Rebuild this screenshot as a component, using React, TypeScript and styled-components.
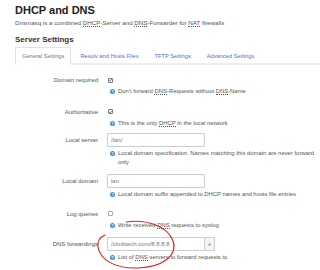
import React from 'react'
import styled, { createGlobalStyle } from 'styled-components'

const GlobalStyle = createGlobalStyle`
  html, body {
    margin: 0;
    padding: 0;
    background: #fff;
  }
  body {
    font-family: "Liberation Sans", Arial, sans-serif;
    color: #404040;
  }
`

const Page = styled.div`
  position: relative;
  width: 320px;
  height: 270px;
  overflow: hidden;
  padding: 4px 0 0 15px;
  box-sizing: border-box;
`

const Title = styled.h2`
  margin: 0;
  font-size: 11px;
  line-height: 13px;
  font-weight: bold;
  color: #222;
`

const Subtitle = styled.div`
  margin-top: 2px;
  font-size: 6.2px;
  line-height: 8px;
  color: #555;
  white-space: nowrap;
`

const Abbr = styled.abbr`
  text-decoration: none;
  border-bottom: 0.5px dotted #555;
`

const SectionTitle = styled.h3`
  margin: 8px 0 0;
  font-size: 8px;
  line-height: 10px;
  font-weight: bold;
  color: #333;
`

const TabList = styled.ul`
  display: flex;
  list-style: none;
  margin: 2px 0 0;
  padding: 0;
  border-bottom: 2px solid #eee;
  height: 16px;
`

const Tab = styled.li<{ $active?: boolean }>`
  box-sizing: border-box;
  height: 18px;
  padding: 0 6px;
  margin-right: 2px;
  font-size: 5.7px;
  line-height: 17px;
  white-space: nowrap;
  color: ${p => (p.$active ? '#777' : '#4c6fd4')};
  background: ${p => (p.$active ? '#fff' : 'transparent')};
  border: 1px solid ${p => (p.$active ? '#e2e2e2' : 'transparent')};
  border-bottom-color: ${p => (p.$active ? '#fff' : 'transparent')};
`

const Row = styled.div<{ $space: number }>`
  display: grid;
  grid-template-columns: 83px 1fr;
  column-gap: 9px;
  margin-top: ${p => p.$space}px;
`

const Label = styled.label<{ $h: number }>`
  text-align: right;
  font-size: 6px;
  line-height: ${p => p.$h}px;
  color: #555;
  white-space: nowrap;
`

const Field = styled.div`
  display: flex;
  flex-direction: column;
  min-width: 0;
`

const Control = styled.div<{ $h: number }>`
  display: flex;
  align-items: center;
  height: ${p => p.$h}px;
`

const Check = styled.span<{ $checked?: boolean }>`
  display: inline-flex;
  align-items: center;
  justify-content: center;
  box-sizing: border-box;
  width: 5px;
  height: 5px;
  margin-left: 1px;
  border: 0.7px solid ${p => (p.$checked ? '#777' : '#aaa')};
  border-radius: 1px;
  background: #fff;
`

const Input = styled.div`
  box-sizing: border-box;
  width: 98px;
  height: 14px;
  border: 1px solid #ccc;
  border-radius: 1px;
  padding: 0 3px;
  font-size: 6px;
  line-height: 12px;
  color: #777;
  white-space: nowrap;
`

const AddButton = styled.div`
  box-sizing: border-box;
  width: 10px;
  height: 14px;
  border: 1px solid #ccc;
  border-left: none;
  background: #f5f5f5;
  color: #4a9a4a;
  font-size: 6px;
  font-weight: bold;
  line-height: 12px;
  text-align: center;
`

const Help = styled.div`
  margin-top: 2px;
  padding-left: 11px;
  position: relative;
  font-size: 5.9px;
  line-height: 8.5px;
  color: #555;
  white-space: nowrap;
`

const HelpIcon = styled.span`
  position: absolute;
  left: 3px;
  top: 2px;
  width: 5px;
  height: 5px;
  border-radius: 50%;
  background: #3d8fe0;
  color: #fff;
  font-size: 4px;
  font-weight: bold;
  line-height: 5px;
  text-align: center;
`

const Annotation = styled.svg`
  position: absolute;
  left: 0;
  top: 0;
  pointer-events: none;
`

const Tick = () => (
  <svg width="4" height="4" viewBox="0 0 4 4">
    <path d="M0.6 2 L1.6 3 L3.4 0.8" fill="none" stroke="#222" strokeWidth="0.9" />
  </svg>
)

const HelpText = ({ children }: React.PropsWithChildren<unknown>) => (
  <Help>
    <HelpIcon>?</HelpIcon>
    {children}
  </Help>
)

const App = () => (
  <>
    <GlobalStyle />
    <Page>
      <Title>DHCP and DNS</Title>
      <Subtitle>
        Dnsmasq is a combined <Abbr>DHCP</Abbr>-Server and <Abbr>DNS</Abbr>-Forwarder for <Abbr>NAT</Abbr> firewalls
      </Subtitle>
      <SectionTitle>Server Settings</SectionTitle>
      <TabList>
        <Tab $active>General Settings</Tab>
        <Tab>Resolv and Hosts Files</Tab>
        <Tab>TFTP Settings</Tab>
        <Tab>Advanced Settings</Tab>
      </TabList>

      <Row $space={10}>
        <Label $h={10}>Domain required</Label>
        <Field>
          <Control $h={10}><Check $checked><Tick /></Check></Control>
          <HelpText>Don't forward <Abbr>DNS</Abbr>-Requests without <Abbr>DNS</Abbr>-Name</HelpText>
        </Field>
      </Row>

      <Row $space={11}>
        <Label $h={10}>Authoritative</Label>
        <Field>
          <Control $h={10}><Check $checked><Tick /></Check></Control>
          <HelpText>This is the only <Abbr>DHCP</Abbr> in the local network</HelpText>
        </Field>
      </Row>

      <Row $space={6}>
        <Label $h={14}>Local server</Label>
        <Field>
          <Control $h={14}><Input>/lan/</Input></Control>
          <HelpText>
            Local domain specification. Names matching this domain are never forward
            <br />only
          </HelpText>
        </Field>
      </Row>

      <Row $space={8}>
        <Label $h={14}>Local domain</Label>
        <Field>
          <Control $h={14}><Input>lan</Input></Control>
          <HelpText>Local domain suffix appended to DHCP names and hosts file entries</HelpText>
        </Field>
      </Row>

      <Row $space={10}>
        <Label $h={10}>Log queries</Label>
        <Field>
          <Control $h={10}><Check /></Control>
          <HelpText>Write received <Abbr>DNS</Abbr> requests to syslog</HelpText>
        </Field>
      </Row>

      <Row $space={8}>
        <Label $h={14}>DNS forwardings</Label>
        <Field>
          <Control $h={14}>
            <Input>/clmbtech.com/8.8.8.8</Input>
            <AddButton>+</AddButton>
          </Control>
          <HelpText>List of <Abbr>DNS</Abbr> servers to forward requests to</HelpText>
        </Field>
      </Row>

      <Annotation width="320" height="270" viewBox="0 0 320 270">
        <path
          d="M126 222 C146 219 168 226 173 241 C178 256 162 267 138 268 C114 269 100 259 98 247 C97 240 100 237 105 235"
          fill="none"
          stroke="#e0202a"
          strokeWidth="1.1"
          strokeLinecap="round"
        />
      </Annotation>
    </Page>
  </>
)

export default App
